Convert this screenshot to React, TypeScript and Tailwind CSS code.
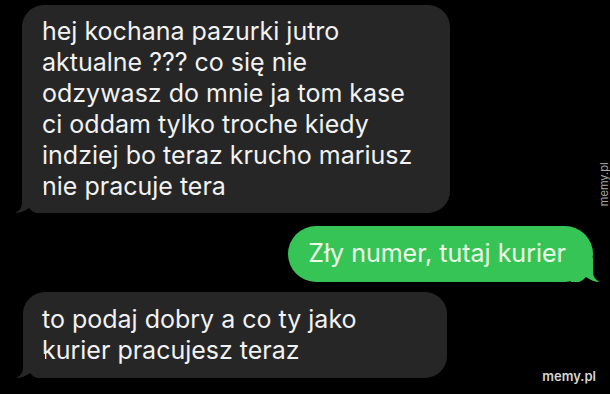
import React from 'react';

const font = { fontFamily: 'Inter, "Noto Sans", sans-serif' };

function TailLeft({ color }: { color: string }) {
  return (
    <svg
      className="absolute left-[-8px] bottom-0"
      width="30"
      height="24"
      viewBox="0 0 30 24"
    >
      <path
        d="M8 0 L8 14 C8 19 5 22 1 24 C6 24 11 22 15 19 C17 21 19 23 22 24 L30 24 L30 0 Z"
        fill={color}
      />
    </svg>
  );
}

function TailRight({ color }: { color: string }) {
  return (
    <svg
      className="absolute right-[-8px] bottom-0"
      width="30"
      height="24"
      viewBox="0 0 30 24"
    >
      <path
        d="M22 0 L22 14 C22 19 25 22 29 24 C24 24 19 22 15 19 C13 21 11 23 8 24 L0 24 L0 0 Z"
        fill={color}
      />
    </svg>
  );
}

const first = [
  'hej kochana pazurki jutro',
  'aktualne ??? co się nie',
  'odzywasz do mnie ja tom kase',
  'ci oddam tylko troche kiedy',
  'indziej bo teraz krucho mariusz',
  'nie pracuje tera',
];

export default function App() {
  return (
    <div
      className="relative w-[610px] h-[394px] bg-black overflow-hidden flex flex-col pt-[5px]"
      style={font}
    >
      <div className="relative ml-[22px] w-[428px] rounded-[22px] bg-[#262626] pl-[20px] py-[11px] text-[25px] leading-[31px] text-[#f2f2f2] whitespace-nowrap">
        {first.map((l) => (
          <div key={l}>{l}</div>
        ))}
        <TailLeft color="#262626" />
      </div>

      <div className="flex justify-end mt-[13px] pr-[17px]">
        <div className="relative rounded-[28px] bg-[#37c456] h-[56px] flex items-center pl-[20px] pr-[27px] text-[25px] text-[#eefbe9] whitespace-nowrap">
          Zły numer, tutaj kurier
          <TailRight color="#37c456" />
        </div>
      </div>

      <div className="relative mt-[10px] ml-[23px] w-[424px] rounded-[22px] bg-[#262626] pl-[19px] py-[12px] text-[25px] leading-[31px] text-[#f2f2f2] whitespace-nowrap">
        <div>to podaj dobry a co ty jako</div>
        <div>kurier pracujesz teraz</div>
        <TailLeft color="#262626" />
      </div>

      <div className="absolute right-[14px] bottom-[8px] text-[13px] font-semibold text-[#d6d6d6]">
        memy.pl
      </div>
      <div className="absolute right-[-16px] top-[176px] -rotate-90 text-[11px] text-[#a8a8a8]">
        memy.pl
      </div>
    </div>
  );
}
